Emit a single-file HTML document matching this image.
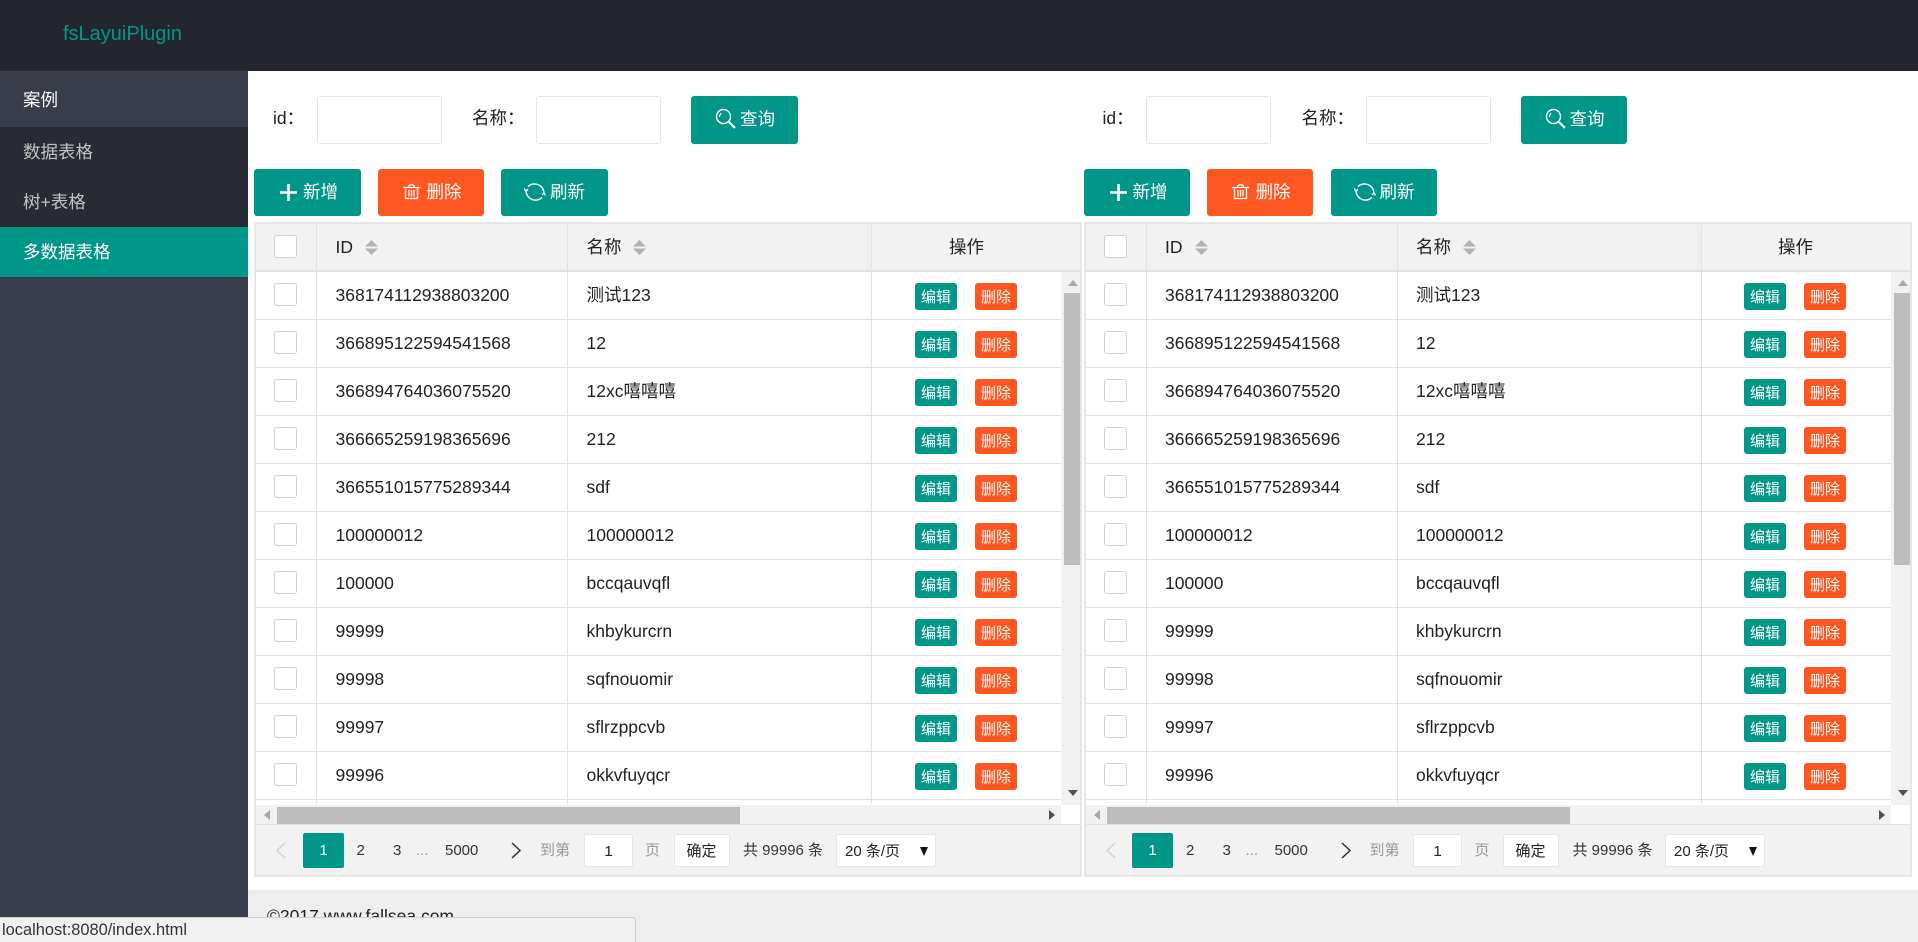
<!DOCTYPE html>
<html lang="zh-CN"><head><meta charset="utf-8"><title>fsLayuiPlugin</title>
<style>
*{box-sizing:border-box;margin:0;padding:0}
html,body{width:1918px;height:942px;overflow:hidden;background:#fff}
body{position:relative;font-family:"Liberation Sans","Noto Sans CJK SC",sans-serif;font-size:17.5px;color:#222}
.a{position:absolute;white-space:nowrap}
#hd{left:0;top:0;width:1918px;height:71px;background:#23262e}
#logo{left:63px;top:22px;font-size:20px;line-height:24px;color:#009688}
#sb{left:0;top:71px;width:248px;height:871px;background:#393d49}
.n{left:0;width:248px;padding-left:23px;color:#c2c2c2}
#ft{left:248px;top:890px;width:1670px;height:52px;background:#eee}
#ft span{position:absolute;left:19px;top:15px;color:#222;font-size:17.5px;line-height:22px}
#st{left:0;top:917px;width:636px;height:25px;background:#f1f1f1;border:1px solid #d0d0d0;border-left:0;border-bottom:0;border-radius:0 4px 0 0;font-size:16.4px;line-height:25px;padding-left:2px;color:#333}
.pane{position:absolute;left:0;top:0;width:0;height:0}
.pane.p2{left:829.5px}
.lb{line-height:22px;top:107px;color:#222}
.ip{top:96px;height:48px;width:125px;border:1px solid #e6e6e6;border-radius:3px;background:#fff}
.btn{height:47px;top:169px;border-radius:3px;background:#009688;color:#fff;line-height:46px}
.btn span{position:absolute;top:0}
.btn svg{position:absolute}
.red{background:#ff5722}
.th{position:absolute;left:256px;top:224px;width:826px;height:46px;background:#f2f2f2}
.hl{position:absolute;left:256px;top:270px;width:826px;height:2px;background:#e2e2e2}
.vl{position:absolute;top:224px;height:580px;width:1px;background:#e2e2e2}
.t{position:absolute;line-height:24px;white-space:nowrap;color:#222}
.cb{position:absolute;left:274px;width:23px;height:23px;border:1px solid #d2d2d2;border-radius:3px;background:#fff}
.r{position:absolute;left:256px;width:805px;height:48px;border-bottom:1px solid #e2e2e2}
.r .x{position:absolute;top:10.5px;line-height:24px;white-space:nowrap;color:#222}
.r .c{position:absolute;left:18px;top:11px;width:23px;height:23px;border:1px solid #d2d2d2;border-radius:3px;background:#fff}
.r .id{left:79.5px}.r .nm{left:330.5px}
.r .e,.r .d{position:absolute;top:11px;width:42px;height:27px;border-radius:3px;color:#fff;font-size:15px;line-height:29px;text-align:center;background:#009688;font-weight:400}
.r .e{left:659px}.r .d{left:719px;background:#ff5722}
.p2 .r .e{left:658.5px}.p2 .r .d{left:718.5px}
.fx{position:absolute;left:871px;top:224px;width:1px;height:580px;background:#e2e2e2;box-shadow:-3px 0 4px rgba(0,0,0,.1)}
.vs{position:absolute;left:1061px;top:272px;width:21px;height:533px;background:#f1f1f1}
.vs i{position:absolute;left:3px;top:21px;width:17px;height:272px;background:#bdbdbd}
.hs{position:absolute;left:256px;top:805px;width:805px;height:19px;background:#f1f1f1}
.hs i{position:absolute;left:21px;top:2px;width:463px;height:17px;background:#bdbdbd}
.tri{position:absolute;width:0;height:0}
.pg{position:absolute;left:256px;top:824px;width:826px;height:52px;background:#f2f2f2;border-top:1px solid #e2e2e2}
.p{position:absolute;top:0;font-size:15px;line-height:52px;color:#333;white-space:nowrap}
.ws{position:absolute;background:#fff;border:1px solid #e6e6e6;border-radius:2px;font-size:15px;color:#222;line-height:33px;white-space:nowrap}
.bd{left:254px;top:222px;width:828px;height:655px;border:2px solid #e6e6e6}
</style></head><body>
<div class="a" id="hd"></div>
<div class="a" id="logo">fsLayuiPlugin</div>
<div class="a" id="sb"></div>
<div class="a n" style="top:71px;height:56px;line-height:58px;color:#fff;background:#393d49">案例</div>
<div class="a n" style="top:127px;height:50px;line-height:51px;background:#282b33">数据表格</div>
<div class="a n" style="top:177px;height:50px;line-height:50px;background:#282b33">树+表格</div>
<div class="a n" style="top:227px;height:50px;line-height:51px;color:#fff;background:#009688">多数据表格</div>

<div class="pane">
<div class="a lb" style="left:273px">id：</div><div class="a ip" style="left:317px"></div>
<div class="a lb" style="left:472px">名称：</div><div class="a ip" style="left:536px"></div>
<div class="a btn" style="left:691px;width:107px;top:96px;height:48px"><svg style="left:24px;top:12px" width="22" height="22" viewBox="0 0 22 22" fill="none" stroke="#fff"><circle cx="8.5" cy="8.5" r="7" stroke-width="1.4"/><path d="M13.500 13.500l6.500 6.500" stroke-width="2.200"/><path d="M4.500 9c0-2 .7-3 1.800-3.800" stroke-width="1.200"/></svg><span style="left:49px;top:0">查询</span></div>
<div class="a btn" style="left:254px;width:107px"><svg style="left:26px;top:15px" width="17" height="17" viewBox="0 0 17 17" fill="none" stroke="#fff" stroke-width="2.600"><path d="M8.500 0v17M0 8.500h17"/></svg><span style="left:49px">新增</span></div>
<div class="a btn red" style="left:378px;width:106px"><svg style="left:25px;top:15px" width="17" height="17" viewBox="0 0 17 17" fill="none" stroke="#fff" stroke-width="1.300"><path d="M0 3.500h17M5.500 3.500c0-2 1-2.800 3-2.800s3 .8 3 2.800M2.500 3.500v11h12V3.500M6 6v6.500M8.500 6v6.500M11 6v6.500"/></svg><span style="left:48.500px">删除</span></div>
<div class="a btn" style="left:501px;width:107px"><svg style="left:23px;top:12px" width="22" height="22" viewBox="0 0 22 22" fill="none" stroke="#fff" stroke-width="1.400"><path d="M4 5.500A9.500 9.500 0 0 1 20 12"/><path d="M18 16.500A9.500 9.500 0 0 1 2 10"/><path d="M1.500 10l-1.200-2.600M2 10l2-1.800M20 12l-2 1.800M20 12l1.400 2.400"/></svg><span style="left:49px">刷新</span></div>
<div class="th"></div><div class="hl"></div>
<div class="r" style="top:272px"><i class="c"></i><span class="x id">368174112938803200</span><span class="x nm">测试123</span><b class="e">编辑</b><b class="d">删除</b></div>
<div class="r" style="top:320px"><i class="c"></i><span class="x id">366895122594541568</span><span class="x nm">12</span><b class="e">编辑</b><b class="d">删除</b></div>
<div class="r" style="top:368px"><i class="c"></i><span class="x id">366894764036075520</span><span class="x nm">12xc嘻嘻嘻</span><b class="e">编辑</b><b class="d">删除</b></div>
<div class="r" style="top:416px"><i class="c"></i><span class="x id">366665259198365696</span><span class="x nm">212</span><b class="e">编辑</b><b class="d">删除</b></div>
<div class="r" style="top:464px"><i class="c"></i><span class="x id">366551015775289344</span><span class="x nm">sdf</span><b class="e">编辑</b><b class="d">删除</b></div>
<div class="r" style="top:512px"><i class="c"></i><span class="x id">100000012</span><span class="x nm">100000012</span><b class="e">编辑</b><b class="d">删除</b></div>
<div class="r" style="top:560px"><i class="c"></i><span class="x id">100000</span><span class="x nm">bccqauvqfl</span><b class="e">编辑</b><b class="d">删除</b></div>
<div class="r" style="top:608px"><i class="c"></i><span class="x id">99999</span><span class="x nm">khbykurcrn</span><b class="e">编辑</b><b class="d">删除</b></div>
<div class="r" style="top:656px"><i class="c"></i><span class="x id">99998</span><span class="x nm">sqfnouomir</span><b class="e">编辑</b><b class="d">删除</b></div>
<div class="r" style="top:704px"><i class="c"></i><span class="x id">99997</span><span class="x nm">sflrzppcvb</span><b class="e">编辑</b><b class="d">删除</b></div>
<div class="r" style="top:752px"><i class="c"></i><span class="x id">99996</span><span class="x nm">okkvfuyqcr</span><b class="e">编辑</b><b class="d">删除</b></div>
<div class="vl" style="left:316px"></div><div class="vl" style="left:567px"></div>
<div class="fx"></div>
<i class="cb" style="top:235px"></i>
<div class="t" style="left:335.500px;top:235px">ID</div>
<svg style="position:absolute;left:365px;top:240px" width="13" height="15" viewBox="0 0 13 15" fill="#b2b2b2"><path d="M6.500 0L13 6.500H0zM0 8.500h13L6.500 15z"/></svg>
<div class="t" style="left:586.500px;top:235px">名称</div>
<svg style="position:absolute;left:633px;top:240px" width="13" height="15" viewBox="0 0 13 15" fill="#b2b2b2"><path d="M6.500 0L13 6.500H0zM0 8.500h13L6.500 15z"/></svg>
<div class="t" style="left:949px;top:235px">操作</div>
<div class="vs"><i></i></div>
<div class="tri" style="left:1068px;top:280px;border:5px solid transparent;border-top:0;border-bottom:6px solid #a8a8a8"></div>
<div class="tri" style="left:1068px;top:790px;border:5px solid transparent;border-bottom:0;border-top:6px solid #505050"></div>
<div class="hs"><i></i></div>
<div class="tri" style="left:264px;top:810px;border:5px solid transparent;border-left:0;border-right:6px solid #a8a8a8"></div>
<div class="tri" style="left:1049px;top:810px;border:5px solid transparent;border-right:0;border-left:6px solid #505050"></div>
<div class="pg">
<svg style="position:absolute;left:19px;top:17px" width="11" height="17" viewBox="0 0 11 17" fill="none" stroke="#d2d2d2" stroke-width="1.500"><path d="M10 1L2 8.500 10 16"/></svg>
<div style="position:absolute;left:47px;top:8px;width:41px;height:35px;background:#009688;border-radius:2px;color:#fff;font-size:15px;line-height:35px;text-align:center">1</div>
<span class="p" style="left:100.500px">2</span><span class="p" style="left:137px">3</span><span class="p" style="left:160px;color:#999">...</span><span class="p" style="left:189px">5000</span>
<svg style="position:absolute;left:255px;top:17px" width="11" height="17" viewBox="0 0 11 17" fill="none" stroke="#333" stroke-width="1.500"><path d="M1 1l8 7.500L1 16"/></svg>
<span class="p" style="left:284px;color:#999">到第</span>
<div class="ws" style="left:328px;top:9px;width:49px;height:33px;text-align:center">1</div>
<span class="p" style="left:389px;color:#999">页</span>
<div class="ws" style="left:417.500px;top:9px;width:56px;height:33px;text-align:center">确定</div>
<span class="p" style="left:487px">共 99996 条</span>
<div class="ws" style="left:580px;top:9px;width:100px;height:33px;padding-left:8px">20 条/页<svg style="position:absolute;left:83px;top:12px" width="8" height="9" viewBox="0 0 8 9"><path d="M0 0h8L4 9z" fill="#111"/></svg></div>
</div>
<div class="a bd"></div>
</div>

<div class="pane p2">
<div class="a lb" style="left:273px">id：</div><div class="a ip" style="left:316.500px"></div>
<div class="a lb" style="left:472px">名称：</div><div class="a ip" style="left:536px"></div>
<div class="a btn" style="left:691px;width:106.500px;top:96px;height:48px"><svg style="left:24px;top:12px" width="22" height="22" viewBox="0 0 22 22" fill="none" stroke="#fff"><circle cx="8.5" cy="8.5" r="7" stroke-width="1.4"/><path d="M13.500 13.500l6.500 6.500" stroke-width="2.200"/><path d="M4.500 9c0-2 .7-3 1.800-3.800" stroke-width="1.200"/></svg><span style="left:49px;top:0">查询</span></div>
<div class="a btn" style="left:254px;width:106px"><svg style="left:26px;top:15px" width="17" height="17" viewBox="0 0 17 17" fill="none" stroke="#fff" stroke-width="2.600"><path d="M8.500 0v17M0 8.500h17"/></svg><span style="left:49px">新增</span></div>
<div class="a btn red" style="left:377.500px;width:106px"><svg style="left:25px;top:15px" width="17" height="17" viewBox="0 0 17 17" fill="none" stroke="#fff" stroke-width="1.300"><path d="M0 3.500h17M5.500 3.500c0-2 1-2.800 3-2.800s3 .8 3 2.800M2.500 3.500v11h12V3.500M6 6v6.500M8.500 6v6.500M11 6v6.500"/></svg><span style="left:48.500px">删除</span></div>
<div class="a btn" style="left:501px;width:106.500px"><svg style="left:23px;top:12px" width="22" height="22" viewBox="0 0 22 22" fill="none" stroke="#fff" stroke-width="1.400"><path d="M4 5.500A9.500 9.500 0 0 1 20 12"/><path d="M18 16.500A9.500 9.500 0 0 1 2 10"/><path d="M1.500 10l-1.200-2.600M2 10l2-1.800M20 12l-2 1.800M20 12l1.400 2.400"/></svg><span style="left:49px">刷新</span></div>
<div class="th"></div><div class="hl"></div>
<div class="r" style="top:272px"><i class="c"></i><span class="x id">368174112938803200</span><span class="x nm">测试123</span><b class="e">编辑</b><b class="d">删除</b></div>
<div class="r" style="top:320px"><i class="c"></i><span class="x id">366895122594541568</span><span class="x nm">12</span><b class="e">编辑</b><b class="d">删除</b></div>
<div class="r" style="top:368px"><i class="c"></i><span class="x id">366894764036075520</span><span class="x nm">12xc嘻嘻嘻</span><b class="e">编辑</b><b class="d">删除</b></div>
<div class="r" style="top:416px"><i class="c"></i><span class="x id">366665259198365696</span><span class="x nm">212</span><b class="e">编辑</b><b class="d">删除</b></div>
<div class="r" style="top:464px"><i class="c"></i><span class="x id">366551015775289344</span><span class="x nm">sdf</span><b class="e">编辑</b><b class="d">删除</b></div>
<div class="r" style="top:512px"><i class="c"></i><span class="x id">100000012</span><span class="x nm">100000012</span><b class="e">编辑</b><b class="d">删除</b></div>
<div class="r" style="top:560px"><i class="c"></i><span class="x id">100000</span><span class="x nm">bccqauvqfl</span><b class="e">编辑</b><b class="d">删除</b></div>
<div class="r" style="top:608px"><i class="c"></i><span class="x id">99999</span><span class="x nm">khbykurcrn</span><b class="e">编辑</b><b class="d">删除</b></div>
<div class="r" style="top:656px"><i class="c"></i><span class="x id">99998</span><span class="x nm">sqfnouomir</span><b class="e">编辑</b><b class="d">删除</b></div>
<div class="r" style="top:704px"><i class="c"></i><span class="x id">99997</span><span class="x nm">sflrzppcvb</span><b class="e">编辑</b><b class="d">删除</b></div>
<div class="r" style="top:752px"><i class="c"></i><span class="x id">99996</span><span class="x nm">okkvfuyqcr</span><b class="e">编辑</b><b class="d">删除</b></div>
<div class="vl" style="left:316px"></div><div class="vl" style="left:567px"></div>
<div class="fx"></div>
<i class="cb" style="top:235px"></i>
<div class="t" style="left:335.500px;top:235px">ID</div>
<svg style="position:absolute;left:365px;top:240px" width="13" height="15" viewBox="0 0 13 15" fill="#b2b2b2"><path d="M6.500 0L13 6.500H0zM0 8.500h13L6.500 15z"/></svg>
<div class="t" style="left:586.500px;top:235px">名称</div>
<svg style="position:absolute;left:633px;top:240px" width="13" height="15" viewBox="0 0 13 15" fill="#b2b2b2"><path d="M6.500 0L13 6.500H0zM0 8.500h13L6.500 15z"/></svg>
<div class="t" style="left:948.500px;top:235px">操作</div>
<div class="vs"><i></i></div>
<div class="tri" style="left:1068px;top:280px;border:5px solid transparent;border-top:0;border-bottom:6px solid #a8a8a8"></div>
<div class="tri" style="left:1068px;top:790px;border:5px solid transparent;border-bottom:0;border-top:6px solid #505050"></div>
<div class="hs"><i></i></div>
<div class="tri" style="left:264px;top:810px;border:5px solid transparent;border-left:0;border-right:6px solid #a8a8a8"></div>
<div class="tri" style="left:1049px;top:810px;border:5px solid transparent;border-right:0;border-left:6px solid #505050"></div>
<div class="pg">
<svg style="position:absolute;left:19px;top:17px" width="11" height="17" viewBox="0 0 11 17" fill="none" stroke="#d2d2d2" stroke-width="1.500"><path d="M10 1L2 8.500 10 16"/></svg>
<div style="position:absolute;left:46.500px;top:8px;width:41px;height:35px;background:#009688;border-radius:2px;color:#fff;font-size:15px;line-height:35px;text-align:center">1</div>
<span class="p" style="left:100.500px">2</span><span class="p" style="left:137px">3</span><span class="p" style="left:160px;color:#999">...</span><span class="p" style="left:189px">5000</span>
<svg style="position:absolute;left:255px;top:17px" width="11" height="17" viewBox="0 0 11 17" fill="none" stroke="#333" stroke-width="1.500"><path d="M1 1l8 7.500L1 16"/></svg>
<span class="p" style="left:284px;color:#999">到第</span>
<div class="ws" style="left:327.500px;top:9px;width:49px;height:33px;text-align:center">1</div>
<span class="p" style="left:389px;color:#999">页</span>
<div class="ws" style="left:417px;top:9px;width:56px;height:33px;text-align:center">确定</div>
<span class="p" style="left:487px">共 99996 条</span>
<div class="ws" style="left:579.500px;top:9px;width:100px;height:33px;padding-left:8px">20 条/页<svg style="position:absolute;left:83px;top:12px" width="8" height="9" viewBox="0 0 8 9"><path d="M0 0h8L4 9z" fill="#111"/></svg></div>
</div>
<div class="a bd"></div>
</div>

<div class="a" id="ft"><span>©2017 www.fallsea.com</span></div>
<div class="a" id="st">localhost:8080/index.html</div>
</body></html>
